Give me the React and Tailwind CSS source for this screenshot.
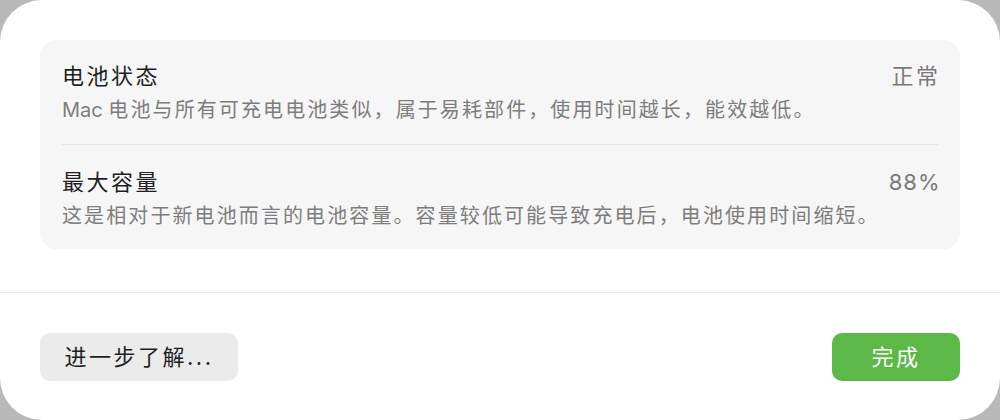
export default function App() {
  const font = { fontFamily: '"Inter", "Noto Sans CJK SC", sans-serif' };

  const rows = [
    {
      title: '电池状态',
      value: '正常',
      desc: (
        <>
          <span className="tracking-normal">Mac </span>
          电池与所有可充电电池类似，属于易耗部件，使用时间越长，能效越低。
        </>
      ),
    },
    {
      title: '最大容量',
      value: <span className="tracking-[1px]">88%</span>,
      desc: '这是相对于新电池而言的电池容量。容量较低可能导致充电后，电池使用时间缩短。',
    },
  ];

  return (
    <div className="w-[1000px] h-[420px] bg-[#b9b9b9]" style={font}>
      <div className="h-full bg-white rounded-[42px] pt-[40px]">
        <div className="mx-[40px] bg-[#f6f6f6] rounded-[16px] px-[22px]">
          {rows.map((row, i) => (
            <div
              key={i}
              className={i === 0 ? 'pt-[22px] pb-[22px] border-b border-[#e4e4e4]' : 'pt-[23px] pb-[21px]'}
            >
              <div className="flex items-center justify-between">
                <span className="text-[22px] leading-[28px] tracking-[2.5px] text-[#1f1f1f]">{row.title}</span>
                <span className="text-[22px] leading-[28px] tracking-[2.5px] text-[#7a7a7a] -mr-[2.5px]">{row.value}</span>
              </div>
              <p className="mt-[8px] text-[20px] leading-[24px] tracking-[2.1px] text-[#7d7d7d] whitespace-nowrap">
                {row.desc}
              </p>
            </div>
          ))}
        </div>

        <div className="mt-[43px] border-t border-[#e2e2e2]" />

        <div className="flex justify-between px-[40px] pt-[40px]">
          <button className="w-[198px] h-[48px] rounded-[10px] bg-[#ebebeb] text-[22px] tracking-[2.5px] text-[#1f1f1f]">
            进一步了解...
          </button>
          <button className="w-[128px] h-[48px] rounded-[10px] bg-[#5cb847] text-[22px] tracking-[2.5px] text-white">
            完成
          </button>
        </div>
      </div>
    </div>
  );
}
